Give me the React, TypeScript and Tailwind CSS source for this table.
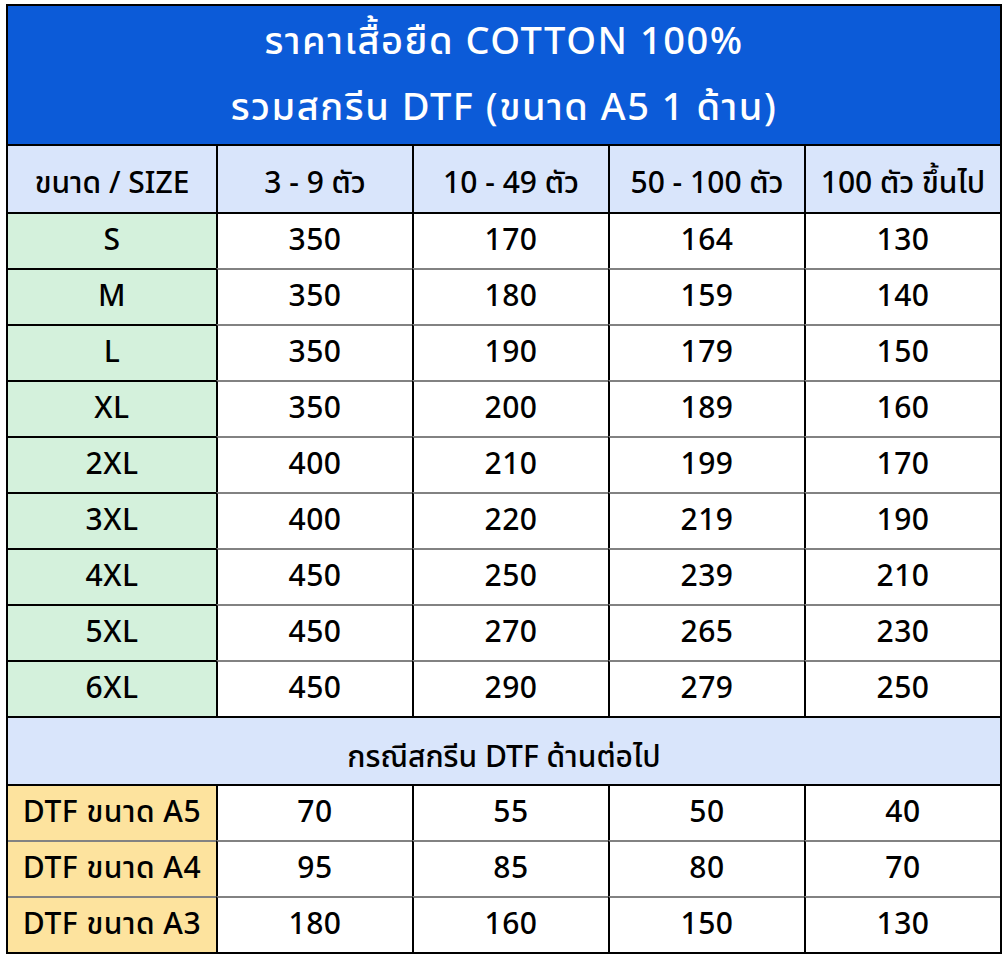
const sizes = [
  { size: 'S', p: ['350', '170', '164', '130'] },
  { size: 'M', p: ['350', '180', '159', '140'] },
  { size: 'L', p: ['350', '190', '179', '150'] },
  { size: 'XL', p: ['350', '200', '189', '160'] },
  { size: '2XL', p: ['400', '210', '199', '170'] },
  { size: '3XL', p: ['400', '220', '219', '190'] },
  { size: '4XL', p: ['450', '250', '239', '210'] },
  { size: '5XL', p: ['450', '270', '265', '230'] },
  { size: '6XL', p: ['450', '290', '279', '250'] },
]

const extra = [
  { label: 'DTF ขนาด A5', p: ['70', '55', '50', '40'] },
  { label: 'DTF ขนาด A4', p: ['95', '85', '80', '70'] },
  { label: 'DTF ขนาด A3', p: ['180', '160', '150', '130'] },
]

const cols = ['3 - 9 ตัว', '10 - 49 ตัว', '50 - 100 ตัว', '100 ตัว ขึ้นไป']

const font = { fontFamily: "'Noto Sans Thai', 'Noto Sans', 'Liberation Sans', sans-serif" }

// ── App ───────────────────────────────────────────────────────────────────────

export default function App() {
  return (
    <div className="bg-white w-[1008px] h-[958px] pl-[6px] pt-[4px]" style={font}>
      <div className="w-[996px] border-2 border-black text-black">
        {/* Title */}
        <div className="h-[138px] bg-[#0c5bd8] flex flex-col items-center justify-center text-white text-[38px] font-medium tracking-[1.5px] leading-[66px] pt-[2px]">
          <div>ราคาเสื้อยืด COTTON 100%</div>
          <div>รวมสกรีน DTF (ขนาด A5 1 ด้าน)</div>
        </div>

        {/* Column header */}
        <div className="flex border-t-2 border-black h-[68px] bg-[#d9e5fb] text-[30px] font-medium">
          <div className="w-[208px] pt-[10px] flex items-center justify-center whitespace-nowrap">ขนาด / SIZE</div>
          {cols.map((c) => (
            <div key={c} className="w-[196px] pt-[10px] border-l-2 border-black flex items-center justify-center whitespace-nowrap">
              {c}
            </div>
          ))}
        </div>

        {/* Sizes */}
        {sizes.map((r, i) => (
          <div key={r.size} className="flex h-[56px] text-[30px] font-medium tracking-[0.5px]">
            <div className="w-[208px] border-t-2 border-black bg-[#d4f1dc] flex items-center justify-center">
              {r.size}
            </div>
            {r.p.map((v, j) => (
              <div
                key={j}
                className={`w-[196px] border-l-2 border-l-black border-t-2 flex items-center justify-center ${i === 0 ? 'border-t-black' : 'border-t-[#828282]'}`}
              >
                {v}
              </div>
            ))}
          </div>
        ))}

        {/* Sub header */}
        <div className="h-[68px] border-t-2 border-black bg-[#d9e5fb] flex items-center justify-center text-[30px] font-medium pt-[14px]">
          กรณีสกรีน DTF ด้านต่อไป
        </div>

        {/* Extra DTF */}
        {extra.map((r, i) => (
          <div key={r.label} className="flex h-[56px] text-[30px] font-medium tracking-[0.5px]">
            <div
              className={`w-[208px] border-t-2 bg-[#fde39e] flex items-center justify-center whitespace-nowrap ${i === 0 ? 'border-black' : 'border-[#828282]'}`}
            >
              {r.label}
            </div>
            {r.p.map((v, j) => (
              <div
                key={j}
                className={`w-[196px] border-l-2 border-l-black border-t-2 flex items-center justify-center ${i === 0 ? 'border-t-black' : 'border-t-[#828282]'}`}
              >
                {v}
              </div>
            ))}
          </div>
        ))}
      </div>
    </div>
  )
}
